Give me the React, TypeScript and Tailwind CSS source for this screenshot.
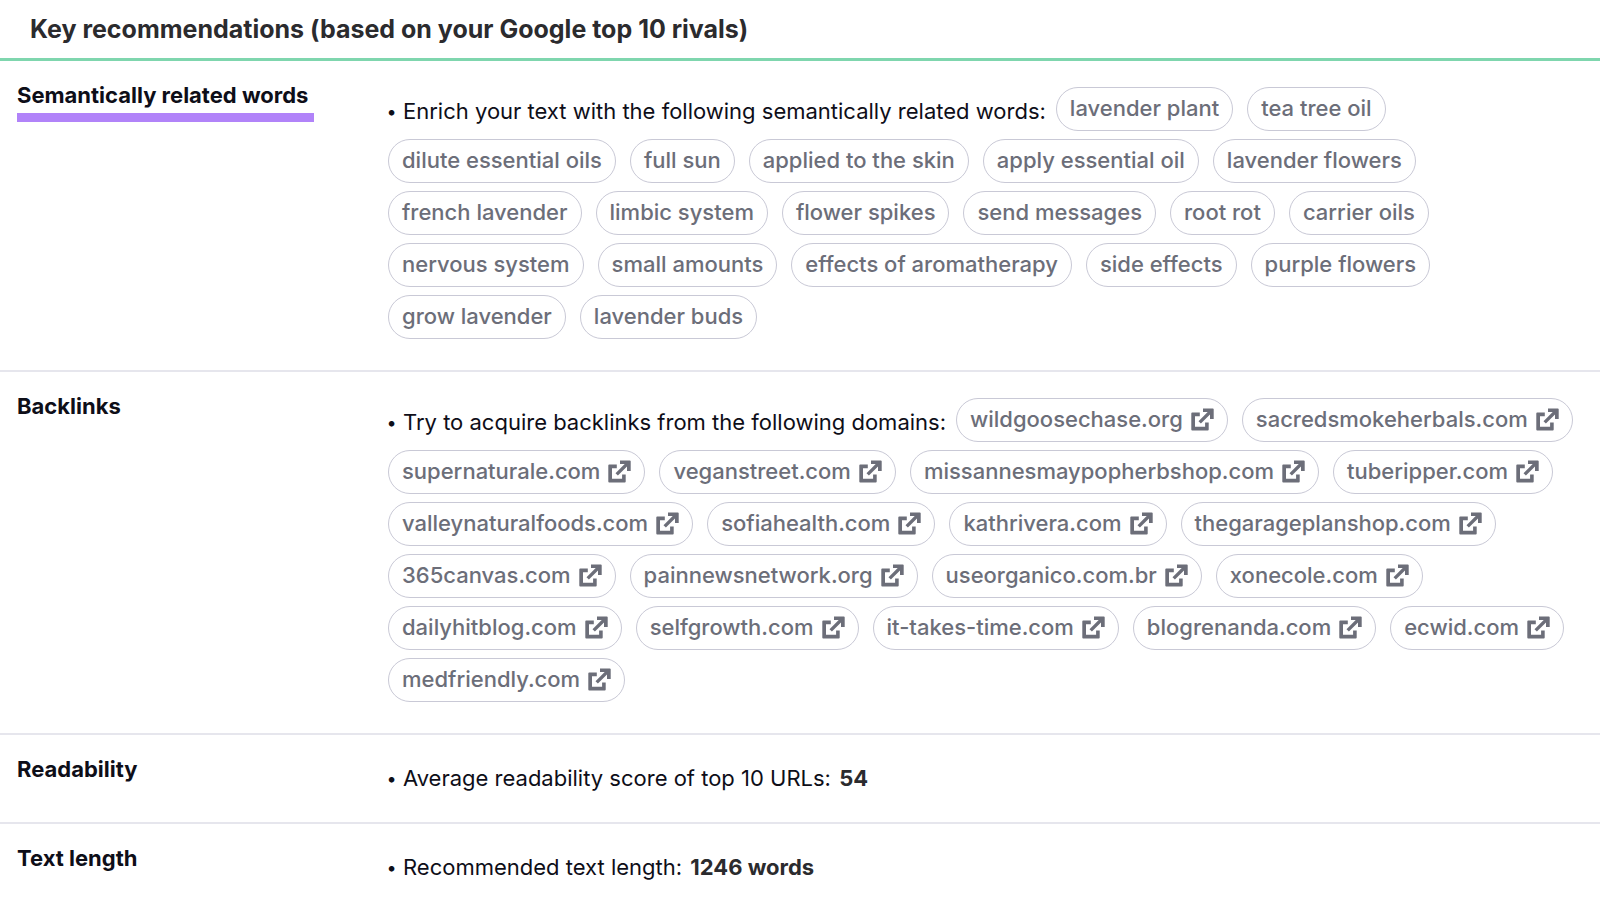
import React from 'react';

const relatedWords = [
  'lavender plant',
  'tea tree oil',
  'dilute essential oils',
  'full sun',
  'applied to the skin',
  'apply essential oil',
  'lavender flowers',
  'french lavender',
  'limbic system',
  'flower spikes',
  'send messages',
  'root rot',
  'carrier oils',
  'nervous system',
  'small amounts',
  'effects of aromatherapy',
  'side effects',
  'purple flowers',
  'grow lavender',
  'lavender buds'
];

const domains = [
  'wildgoosechase.org',
  'sacredsmokeherbals.com',
  'supernaturale.com',
  'veganstreet.com',
  'missannesmaypopherbshop.com',
  'tuberipper.com',
  'valleynaturalfoods.com',
  'sofiahealth.com',
  'kathrivera.com',
  'thegarageplanshop.com',
  '365canvas.com',
  'painnewsnetwork.org',
  'useorganico.com.br',
  'xonecole.com',
  'dailyhitblog.com',
  'selfgrowth.com',
  'it-takes-time.com',
  'blogrenanda.com',
  'ecwid.com',
  'medfriendly.com'
];

const chipStyle =
  'mr-[14px] flex h-11 items-center rounded-full border border-[#c9c9d6] px-[13px] pb-[2px] font-medium text-[#6c6e79]';

const ExternalIcon: React.FC = () => (
  <svg viewBox="0 0 23 23" className="ml-2 h-[23px] w-[23px]" fill="currentColor" aria-hidden="true">
    <path d="M8.8 4.6H1.2Q.3 4.6.3 5.5V21.6Q.3 22.5 1.2 22.5H16.8Q17.7 22.5 17.7 21.6V14.4H14.1V18.8H4V8.2H8.8Z" />
    <path d="M12 .4H21.8Q22.7.4 22.7 1.3V11H19V6.5L9.9 15.6L7.5 13.2L16.7 4H12Z" />
  </svg>
);

const Lead: React.FC<{ children: React.ReactNode }> = ({ children }) => (
  <p className="mr-[10px] flex items-center pt-[5px] leading-[25px]">
    <span className="mr-2 flex w-[7px] justify-center text-lg leading-[25px]">•</span>
    <span>{children}</span>
  </p>
);

const Row: React.FC<{ title: string; highlighted?: boolean; children: React.ReactNode }> = ({
  title,
  highlighted,
  children
}) => (
  <section className="grid grid-cols-[371px_1fr] border-b-2 border-[#e6e6ed] pl-[17px] pr-2 last:border-b-0">
    <div className="pt-5">
      <h2
        className={`w-fit font-bold leading-[29px] ${
          highlighted ? 'border-b-[9px] border-[#b183f9] pb-[3px] pr-[6px]' : ''
        }`}
      >
        {title}
      </h2>
    </div>
    <div className="flex flex-wrap items-center gap-y-2 pb-[31px] pt-[26px]">{children}</div>
  </section>
);

const App: React.FC = () => {
  return (
    <main className="min-h-screen bg-white font-['Inter',sans-serif] text-[22px] text-[#0e0e18]">
      <header className="border-b-[3px] border-[#7fd6ae] px-[30px] py-[14px]">
        <h1 className="text-[25px] font-bold leading-[30px] text-[#2b2b2e]">
          Key recommendations (based on your Google top 10 rivals)
        </h1>
      </header>

      <Row title="Semantically related words" highlighted>
        <Lead>Enrich your text with the following semantically related words:</Lead>
        {relatedWords.map((word) => (
          <span key={word} className={chipStyle}>
            {word}
          </span>
        ))}
      </Row>

      <Row title="Backlinks">
        <Lead>Try to acquire backlinks from the following domains:</Lead>
        {domains.map((domain) => (
          <a key={domain} href={`#${domain}`} className={chipStyle}>
            {domain}
            <ExternalIcon />
          </a>
        ))}
      </Row>

      <Row title="Readability">
        <Lead>
          Average readability score of top 10 URLs: <strong className="ml-0.5 font-bold text-[#2b2b2e]">54</strong>
        </Lead>
      </Row>

      <Row title="Text length">
        <Lead>
          Recommended text length: <strong className="ml-0.5 font-bold text-[#2b2b2e]">1246 words</strong>
        </Lead>
      </Row>
    </main>
  );
};

export default App;
